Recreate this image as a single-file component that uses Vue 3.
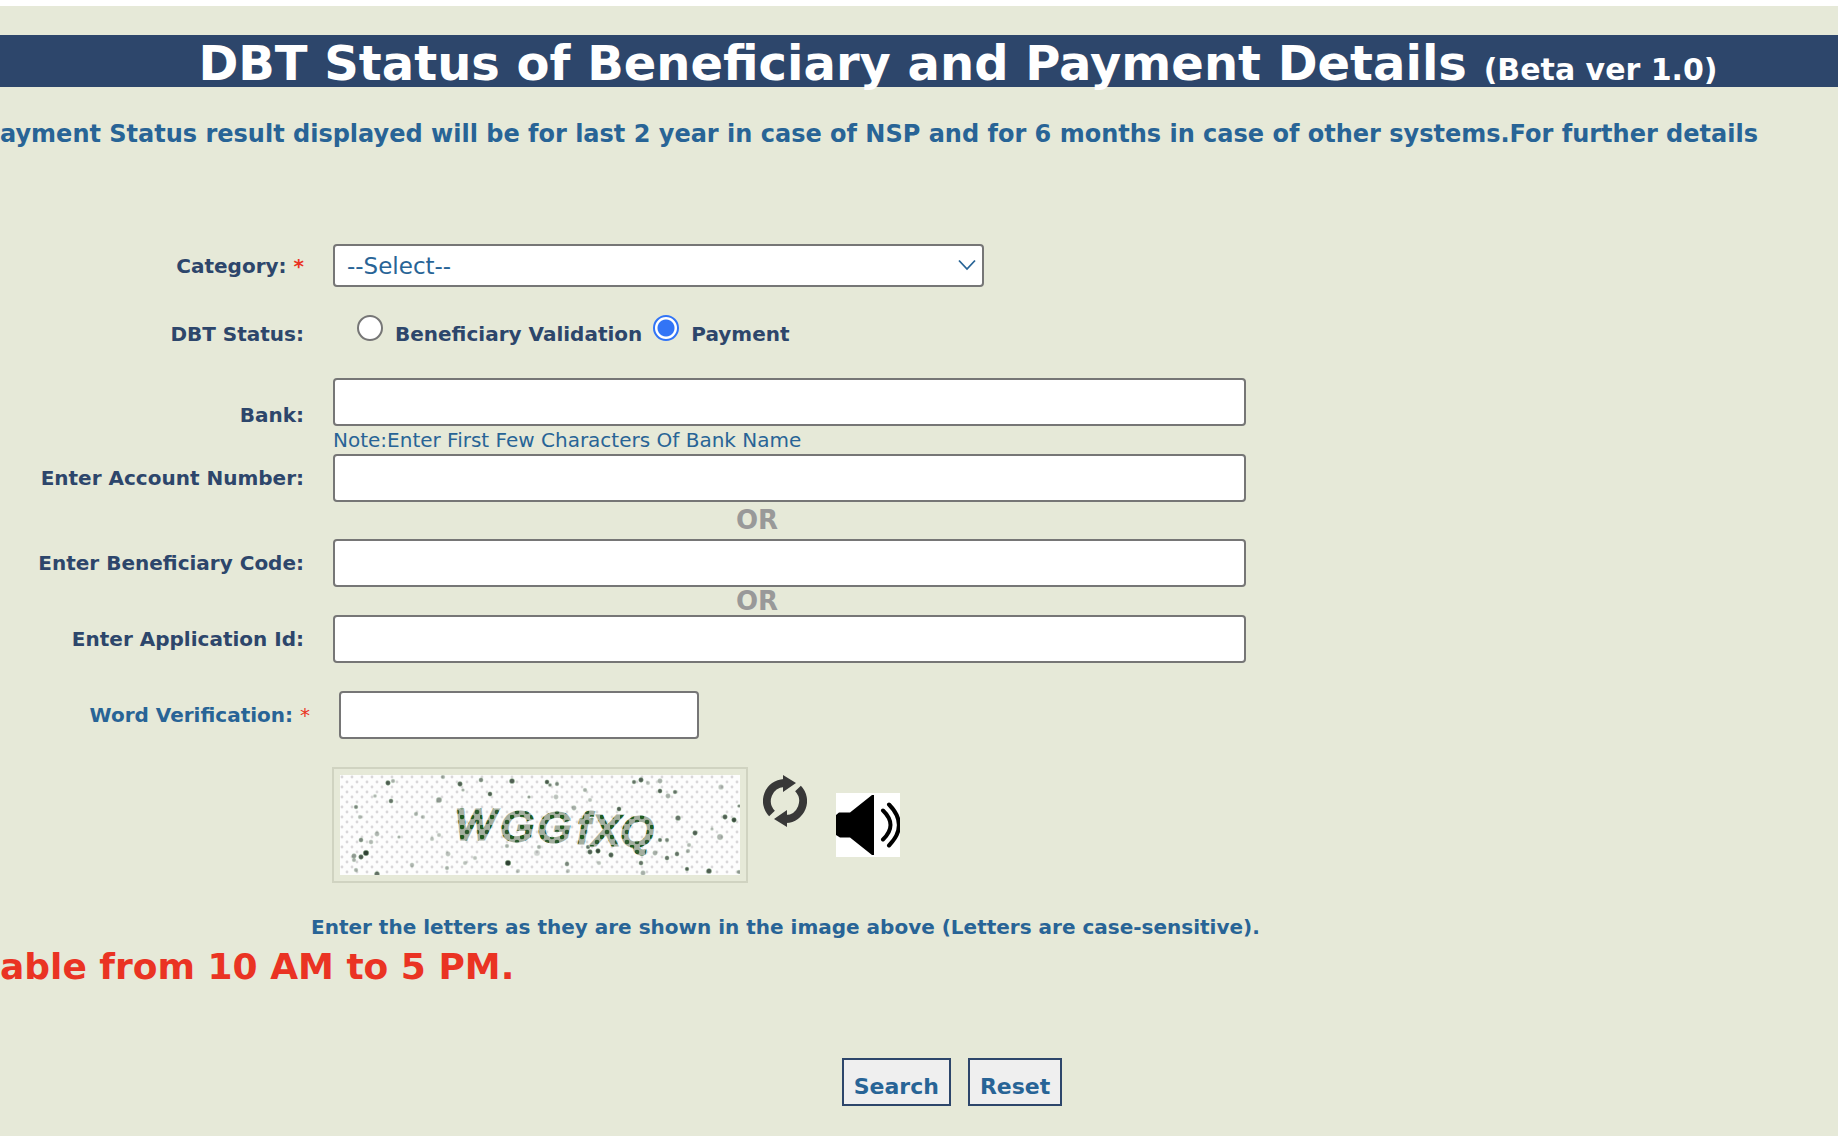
<script setup>
import { ref } from 'vue'

const category = ref('')
const status = ref('payment')
const bank = ref('')
const account = ref('')
const beneficiary = ref('')
const application = ref('')
const word = ref('')

function reset() {
  category.value = ''
  status.value = 'payment'
  bank.value = account.value = beneficiary.value = application.value = word.value = ''
}

// Noise of the captcha: x, y, radius, opacity
const specks = [
  [48, 8, 2.4, 0.8], [53, 6, 2, 0.4], [51, 26, 2.2, 0.7], [16, 32, 2, 0.6], [20, 42, 2, 0.35],
  [99, 25, 2.8, 0.5], [103, 2, 2, 0.4], [120, 9, 2.4, 0.8], [123, 15, 1.6, 0.4], [141, 5, 2.2, 0.6],
  [150, 19, 2.2, 0.8], [172, 6, 2.6, 0.8], [207, 7, 2.2, 0.8], [210, 10, 1.8, 0.6], [217, 9, 2, 0.6],
  [189, 22, 1.6, 0.5], [216, 22, 2.4, 0.3], [245, 15, 2, 0.4], [250, 25, 2, 0.3], [294, 7, 2, 0.7],
  [301, 5, 2.4, 0.8], [308, 8, 2, 0.3], [320, 6, 2.4, 0.4], [320, 16, 2.2, 0.8], [328, 21, 2.4, 0.4],
  [335, 17, 2, 0.7], [381, 12, 2.6, 0.3], [338, 43, 2.6, 0.7], [385, 42, 2.4, 0.8], [394, 45, 2.4, 0.9],
  [355, 58, 2.4, 0.8], [380, 62, 3, 0.35], [320, 65, 2, 0.7], [327, 65, 2, 0.6], [315, 78, 2.4, 0.4],
  [327, 83, 2.2, 0.7], [337, 79, 2.2, 0.7], [348, 76, 2, 0.4], [349, 70, 2, 0.35], [301, 88, 2.2, 0.7],
  [303, 98, 2.4, 0.4], [347, 94, 2, 0.8], [369, 96, 2.6, 0.8], [271, 80, 2.4, 0.8], [258, 76, 2.4, 0.9],
  [250, 77, 2.4, 0.8], [248, 72, 2, 0.7], [259, 88, 2, 0.3], [227, 89, 2.2, 0.6], [228, 96, 2, 0.3],
  [168, 88, 2.8, 0.95], [178, 96, 2, 0.3], [197, 78, 3, 0.2], [199, 72, 2, 0.4], [167, 71, 2, 0.4],
  [108, 79, 2.4, 0.3], [99, 60, 2, 0.3], [92, 64, 2, 0.3], [76, 39, 2, 0.4], [83, 42, 2, 0.3],
  [59, 62, 1.6, 0.4], [37, 59, 2.4, 0.35], [21, 65, 2.2, 0.6], [31, 67, 2.2, 0.35], [26, 78, 2.8, 0.95],
  [21, 82, 2.4, 0.8], [14, 81, 2.4, 0.5], [14, 85, 2, 0.4], [16, 95, 2, 0.4], [37, 99, 2.6, 0.7],
  [72, 90, 2.2, 0.35], [107, 93, 2, 0.4], [125, 88, 2, 0.3], [135, 83, 2, 0.3], [35, 21, 1.8, 0.35],
  [234, 33, 2.4, 0.4], [279, 34, 2.2, 0.8], [399, 31, 1.6, 0.6], [372, 54, 1.6, 0.35], [399, 97, 2, 0.5]
]
</script>

<template>
  <main class="page">
    <h1 class="banner">DBT Status of Beneficiary and Payment Details <small>(Beta ver 1.0)</small></h1>
    <p class="notice">ayment Status result displayed will be for last 2 year in case of NSP and for 6 months in case of other systems.For further details</p>

    <form @submit.prevent @reset.prevent="reset">
      <div class="row">
        <label class="label" for="category">Category: <span class="req">*</span></label>
        <div class="select">
          <select id="category" v-model="category">
            <option value="">--Select--</option>
          </select>
          <svg class="chevron" viewBox="0 0 18 12" aria-hidden="true"><path d="M1 1.5 9 10 17 1.5" fill="none" stroke="#286496" stroke-width="1.8" /></svg>
        </div>
      </div>

      <div class="row status" role="radiogroup" aria-labelledby="status-label">
        <span id="status-label" class="label">DBT Status:</span>
        <div class="radios">
          <label class="radio"><input v-model="status" type="radio" name="status" value="validation">Beneficiary Validation</label>
          <label class="radio"><input v-model="status" type="radio" name="status" value="payment">Payment</label>
        </div>
      </div>

      <div class="row bank">
        <label class="label" for="bank">Bank:</label>
        <div class="stack">
          <input id="bank" v-model="bank" class="field" type="text">
          <span class="note">Note:Enter First Few Characters Of Bank Name</span>
        </div>
      </div>

      <div class="row account">
        <label class="label" for="account">Enter Account Number:</label>
        <input id="account" v-model="account" class="field" type="text">
      </div>
      <div class="or tall">OR</div>
      <div class="row">
        <label class="label" for="beneficiary">Enter Beneficiary Code:</label>
        <input id="beneficiary" v-model="beneficiary" class="field" type="text">
      </div>
      <div class="or">OR</div>
      <div class="row">
        <label class="label" for="application">Enter Application Id:</label>
        <input id="application" v-model="application" class="field" type="text">
      </div>

      <div class="row word">
        <label class="label" for="word">Word Verification: <span class="req">*</span></label>
        <input id="word" v-model="word" class="field" type="text">
      </div>

      <div class="captcha">
        <div class="frame">
          <svg viewBox="0 0 400 100" role="img" aria-label="Captcha">
            <defs>
              <pattern id="grain" width="10" height="10" patternUnits="userSpaceOnUse">
                <rect width="10" height="10" fill="#fdfdfd" />
                <circle cx="2" cy="2" r="1.4" fill="#d9d7d9" />
                <circle cx="7" cy="7" r="1.4" fill="#d9d7d9" />
              </pattern>
              <pattern id="ink" width="10" height="10" patternUnits="userSpaceOnUse">
                <rect width="10" height="10" fill="#a3ae9f" />
                <circle cx="2" cy="2" r="2.3" fill="#1f5a20" />
                <circle cx="7" cy="7" r="2.3" fill="#2c5a2e" />
              </pattern>
            </defs>
            <rect width="400" height="100" fill="url(#grain)" />
            <circle v-for="(s, i) in specks" :key="i" :cx="s[0]" :cy="s[1]" :r="s[2]" :opacity="s[3]" fill="#26382a" stroke="#a8d8a4" stroke-opacity="0.4" />
            <text class="letters" y="64 66 67 68 70 71" x="115 161 198 238 252 281">WGGfXQ</text>
          </svg>
        </div>
        <button class="icon refresh" type="button" aria-label="Refresh captcha">
          <svg viewBox="0 0 44 52" aria-hidden="true">
            <path d="M9 38.500A18 18 0 0 1 21 8M35 13.500A18 18 0 0 1 23 44" fill="none" stroke="#383838" stroke-width="8" />
            <path d="M20 0 33 8 20 17ZM24 52 11 44 24 35Z" fill="#383838" />
          </svg>
        </button>
        <button class="icon sound" type="button" aria-label="Play captcha">
          <svg viewBox="0 0 64 64" aria-hidden="true">
            <path d="M0 22 3 19.500H14L36 2H38V62H36L14 44.500H4L0 42Z" fill="#000" />
            <path d="M47 17.500Q62 32 47 46.500M53 11.500Q73 32 53 52.500" fill="none" stroke="#000" stroke-width="4" stroke-linecap="round" />
          </svg>
        </button>
      </div>

      <p class="hint">Enter the letters as they are shown in the image above (Letters are case-sensitive).</p>
      <p class="hours">able from 10 AM to 5 PM.</p>

      <div class="actions">
        <button type="submit">Search</button>
        <button type="reset">Reset</button>
      </div>
    </form>
  </main>
</template>

<style>
body {
  background: #e6e9d8;
}
</style>

<style scoped>
.page {
  box-sizing: border-box;
  min-height: 100vh;
  padding: 29px 0;
  border-top: 6px solid #fff;
  overflow: hidden;
  background: #e6e9d8;
  color: #286496;
  font: 20px/24px Verdana, "DejaVu Sans", sans-serif;
}
.banner {
  height: 52px;
  margin: 0;
  padding-left: 78px;
  background: #2d466b;
  color: #fff;
  font-size: 48px;
  line-height: 56px;
  text-align: center;
  white-space: nowrap;
}
.banner small {
  font-size: 30px;
}
.notice {
  margin: 33px 0 96px;
  font-size: 24px;
  font-weight: bold;
  line-height: 28px;
  white-space: nowrap;
}
.row {
  display: grid;
  grid-template-columns: 304px 1fr;
  column-gap: 29px;
  align-items: center;
}
.label {
  color: #2d466b;
  font-weight: bold;
  text-align: right;
  white-space: nowrap;
}
.req {
  color: #ea3323;
}
.field,
select {
  box-sizing: border-box;
  width: 100%;
  border: 2px solid #767676;
  border-radius: 4px;
  background: #fff;
  color: #286496;
  font: inherit;
}
.field {
  max-width: 913px;
  height: 48px;
  padding: 0 12px;
}
.select {
  position: relative;
  max-width: 651px;
}
select {
  display: block;
  height: 43px;
  padding: 0 12px;
  appearance: none;
  font-size: 23px;
}
.chevron {
  position: absolute;
  top: 15px;
  right: 8px;
  width: 18px;
  height: 12px;
  pointer-events: none;
}
.status {
  align-items: end;
  margin-top: 28px;
}
.radios {
  display: flex;
  gap: 11px;
  padding-left: 24px;
}
.radio {
  display: flex;
  gap: 12px;
  height: 31px;
  align-items: flex-end;
  color: #2d466b;
  font-weight: bold;
  white-space: nowrap;
}
.radio input {
  align-self: flex-start;
  box-sizing: border-box;
  width: 26px;
  height: 26px;
  margin: 0;
  border: 2px solid #767676;
  border-radius: 50%;
  appearance: none;
  background: #fff;
}
.radio input:checked {
  border-color: #3274f6;
  background: radial-gradient(circle, #3274f6 8px, #fff 9px);
}
.bank {
  margin-top: 32px;
}
.stack {
  display: flex;
  flex-direction: column;
  gap: 2px;
}
.account {
  margin-top: 2px;
}
.or {
  padding-left: 736px;
  color: #999;
  font-size: 26px;
  font-weight: bold;
  line-height: 28px;
}
.or.tall {
  line-height: 37px;
}
.word {
  grid-template-columns: 310px 1fr;
  margin-top: 28px;
}
.word .label {
  color: #286496;
}
.word .req {
  font-weight: normal;
}
.word .field {
  max-width: 360px;
}
.captcha {
  display: flex;
  align-items: flex-start;
  margin: 28px 0 0 332px;
}
.frame {
  padding: 6px;
  border: 2px solid #d0d3c1;
}
.frame svg {
  display: block;
  width: 400px;
  height: 100px;
}
.letters {
  fill: url(#ink);
  stroke: url(#ink);
  stroke-width: 3px;
  font: italic 42px "Liberation Sans", Arial, sans-serif;
}
.icon {
  padding: 0;
  border: 0;
  background: none;
}
.icon svg {
  display: block;
  width: 100%;
  height: 100%;
}
.refresh {
  width: 44px;
  height: 52px;
  margin: 8px 0 0 15px;
}
.sound {
  width: 64px;
  height: 64px;
  margin: 26px 0 0 29px;
  background: #fff;
}
.hint {
  margin: 32px 0 0 311px;
  font-weight: bold;
}
.hours {
  margin: 7px 0 70px;
  color: #ea3323;
  font-size: 36px;
  font-weight: bold;
  line-height: 42px;
}
.actions {
  display: flex;
  justify-content: center;
  gap: 17px;
  padding-left: 66px;
}
.actions button {
  height: 48px;
  padding: 9px 10px 0;
  border: 2px solid #2d466b;
  background: #efefef;
  color: #286496;
  font: bold 22px/26px Verdana, "DejaVu Sans", sans-serif;
}
</style>
